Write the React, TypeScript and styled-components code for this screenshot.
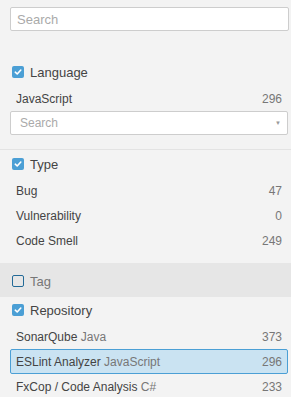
import React from 'react';
import styled, { createGlobalStyle } from 'styled-components';

const GlobalStyle = createGlobalStyle`
  html, body {
    margin: 0;
    padding: 0;
    background: #f3f3f3;
    font-family: "Liberation Sans", Arial, sans-serif;
    color: #444;
  }
`;

const Sidebar = styled.div`
  width: 291px;
  height: 397px;
  overflow: hidden;
  background: #f3f3f3;
`;

const SearchBar = styled.div`
  padding: 7px 2px 24px 10px;
`;

const SearchInput = styled.input`
  box-sizing: border-box;
  display: block;
  width: 279px;
  height: 24px;
  border: 1px solid #cdcdcd;
  border-radius: 2px;
  background: #fff;
  padding: 0 6px;
  font-family: inherit;
  font-size: 13px;
  color: #444;
  outline: none;
  &::placeholder {
    color: #aaa;
  }
`;

const Facet = styled.div<{ $top: number; $bottom: number; $muted?: boolean; $divider?: boolean }>`
  padding: ${p => p.$top}px 3px ${p => p.$bottom}px 10px;
  background: ${p => (p.$muted ? '#e6e6e6' : 'transparent')};
  border-bottom: ${p => (p.$divider ? '1px solid #e3e3e3' : 'none')};
`;

const FacetHeader = styled.div<{ $muted?: boolean }>`
  display: flex;
  align-items: center;
  height: 26px;
  margin-bottom: 1px;
  padding-left: 2px;
  font-size: 13px;
  color: ${p => (p.$muted ? '#777' : '#444')};
`;

const Box = styled.span<{ $checked: boolean }>`
  box-sizing: border-box;
  display: inline-flex;
  align-items: center;
  justify-content: center;
  width: 12px;
  height: 12px;
  margin-right: 6px;
  border-radius: 2px;
  background: ${p => (p.$checked ? '#4b9fd5' : 'transparent')};
  border: ${p => (p.$checked ? 'none' : '1px solid #236a97')};
`;

const Row = styled.div<{ $active?: boolean }>`
  box-sizing: border-box;
  display: flex;
  align-items: center;
  justify-content: space-between;
  height: 25px;
  width: 278px;
  padding: 0 5px;
  font-size: 12px;
  color: #444;
  border: 1px solid ${p => (p.$active ? '#4b9fd5' : 'transparent')};
  border-radius: 2px;
  background: ${p => (p.$active ? '#cae3f2' : 'transparent')};
`;

const Sub = styled.span`
  color: #777;
`;

const Count = styled.span`
  color: #777;
`;

const Select = styled.div`
  box-sizing: border-box;
  display: flex;
  align-items: center;
  justify-content: space-between;
  width: 278px;
  height: 24px;
  border: 1px solid #cdcdcd;
  border-radius: 2px;
  background: #fff;
  padding: 0 6px 0 9px;
  font-size: 12px;
  color: #aaa;
`;

const Arrow = styled.span`
  font-size: 6px;
  color: #999;
`;

const Check = ({ checked }: { checked: boolean }) => (
  <Box $checked={checked}>
    {checked && (
      <svg width="8" height="8" viewBox="0 0 8 8">
        <path d="M1.3 4.2 L3.2 6 L6.8 2" fill="none" stroke="#fff" strokeWidth="1.6" strokeLinecap="round" strokeLinejoin="round" />
      </svg>
    )}
  </Box>
);

type Item = { name: string; sub?: string; count: number; active?: boolean };

const types: Item[] = [
  { name: 'Bug', count: 47 },
  { name: 'Vulnerability', count: 0 },
  { name: 'Code Smell', count: 249 },
];

const repos: Item[] = [
  { name: 'SonarQube', sub: 'Java', count: 373 },
  { name: 'ESLint Analyzer', sub: 'JavaScript', count: 296, active: true },
  { name: 'FxCop / Code Analysis', sub: 'C#', count: 233 },
];

const Items = ({ items }: { items: Item[] }) => (
  <>
    {items.map(it => (
      <Row key={it.name} $active={it.active}>
        <span>
          {it.name}
          {it.sub && <Sub> {it.sub}</Sub>}
        </span>
        <Count>{it.count}</Count>
      </Row>
    ))}
  </>
);

const App = () => (
  <Sidebar>
    <GlobalStyle />
    <SearchBar>
      <SearchInput placeholder="Search" />
    </SearchBar>

    <Facet $top={4} $bottom={14} $divider>
      <FacetHeader>
        <Check checked />
        Language
      </FacetHeader>
      <Items items={[{ name: 'JavaScript', count: 296 }]} />
      <Select>
        Search
        <Arrow>▼</Arrow>
      </Select>
    </Facet>

    <Facet $top={1} $bottom={10}>
      <FacetHeader>
        <Check checked />
        Type
      </FacetHeader>
      <Items items={types} />
    </Facet>

    <Facet $top={5} $bottom={2} $muted>
      <FacetHeader $muted>
        <Check checked={false} />
        Tag
      </FacetHeader>
    </Facet>

    <Facet $top={0} $bottom={0}>
      <FacetHeader>
        <Check checked />
        Repository
      </FacetHeader>
      <Items items={repos} />
    </Facet>
  </Sidebar>
);

export default App;
